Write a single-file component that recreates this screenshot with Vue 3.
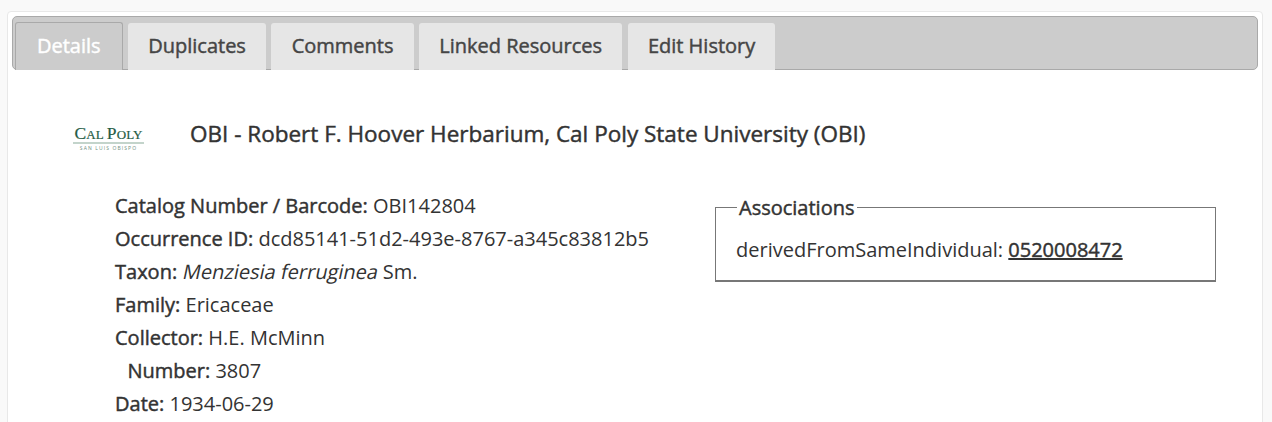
<script setup>
const tabs = ['Details', 'Duplicates', 'Comments', 'Linked Resources', 'Edit History']

const fields = [
  { label: 'Catalog Number / Barcode:', value: 'OBI142804' },
  { label: 'Occurrence ID:', value: 'dcd85141-51d2-493e-8767-a345c83812b5' },
  { label: 'Taxon:', italic: 'Menziesia ferruginea', value: 'Sm.' },
  { label: 'Family:', value: 'Ericaceae' },
  { label: 'Collector:', value: 'H.E. McMinn' },
  { label: 'Number:', value: '3807', indent: true },
  { label: 'Date:', value: '1934-06-29' }
]
</script>

<template>
  <div class="page">
    <div class="card">
      <ul class="tabs">
        <li v-for="(tab, i) in tabs" :key="tab" class="tab" :class="{ active: i === 0 }">{{ tab }}</li>
      </ul>

      <div class="title-row">
        <div class="logo">
          <div class="logo-name"><span class="big">C</span>AL <span class="big">P</span>OLY</div>
          <div class="logo-sub">SAN LUIS OBISPO</div>
        </div>
        <h1 class="title">OBI - Robert F. Hoover Herbarium, Cal Poly State University (OBI)</h1>
      </div>

      <div class="body">
        <div class="fields">
          <div v-for="f in fields" :key="f.label" class="field" :class="{ indent: f.indent }">
            <b>{{ f.label }}</b>
            {{ ' ' }}<i v-if="f.italic">{{ f.italic }}</i><template v-if="f.italic">{{ ' ' }}</template>{{ f.value }}
          </div>
        </div>

        <fieldset class="assoc">
          <legend>Associations</legend>
          derivedFromSameIndividual: <a href="#">0520008472</a>
        </fieldset>
      </div>
    </div>
  </div>
</template>

<style>
html,
body {
  background: #f9f9f9;
}
</style>

<style scoped>
.page {
  height: 422px;
  overflow: hidden;
  padding: 11px 9px 0 7px;
  box-sizing: border-box;
  font-family: "Open Sans", sans-serif;
  font-size: 20px;
  color: #333;
}

.card {
  height: 440px;
  box-sizing: border-box;
  background: #fff;
  border: 1px solid #e8e8e8;
  border-radius: 4px;
  padding: 4px;
}

.tabs {
  display: flex;
  gap: 5.4px;
  height: 54px;
  box-sizing: border-box;
  margin: 0;
  padding: 6px 0 0 2px;
  list-style: none;
  background: #ccc;
  border: 1px solid #a9a9a9;
  border-radius: 5px;
}

.tab {
  height: 47px;
  padding: 0 20.2px;
  line-height: 45px;
  font-size: 20px;
  font-weight: 400;
  -webkit-text-stroke: 0.45px currentColor;
  color: #454545;
  background: #e6e6e6;
  border-radius: 3px 3px 0 0;
}

.tab.active {
  margin-top: -1px;
  height: 48px;
  padding: 0 21px;
  color: #fff;
  background: #ccc;
  border: 1px solid #a9a9a9;
  border-bottom: 0;
  box-sizing: border-box;
}

.title-row {
  display: flex;
  align-items: flex-start;
  height: 30px;
  margin-top: 49px;
  padding-left: 61px;
}

.logo {
  width: 71px;
  margin: 7px 46px 0 0;
  color: #1f5c45;
  text-align: center;
}

.logo-name {
  font-family: "Liberation Serif", serif;
  font-size: 13px;
  line-height: 14px;
  letter-spacing: 0.15px;
  white-space: nowrap;
  -webkit-text-stroke: 0.2px currentColor;
  border-bottom: 2px solid #c3d4cb;
}

.logo-name .big {
  font-size: 17.5px;
}

.logo-sub {
  font-size: 5px;
  line-height: 8px;
  letter-spacing: 1.1px;
  white-space: nowrap;
  color: #6f8f80;
}

.title {
  margin: 0;
  font-size: 22.5px;
  font-weight: 400;
  -webkit-text-stroke: 0.45px currentColor;
  line-height: 30px;
  color: #333;
}

.body {
  display: flex;
  margin-top: 40px;
}

.fields {
  width: 600px;
  padding-left: 103px;
  box-sizing: content-box;
}

.field {
  height: 33px;
  line-height: 33px;
  white-space: nowrap;
}

.field.indent {
  padding-left: 12.5px;
}

.field b {
  font-weight: 400;
  -webkit-text-stroke: 0.45px currentColor;
}

/* the reference slants the upright face, the italic cut is narrower */
.field i {
  display: inline-block;
  font-style: normal;
  transform: skewX(-12deg);
  transform-origin: 50% 70%;
}

.assoc {
  width: 501px;
  height: 75px;
  box-sizing: border-box;
  margin: 18px 0 0 0;
  padding: 28px 20px 0;
  border: 1px solid #777;
  border-bottom-width: 2px;
  line-height: 28px;
}

.assoc legend {
  padding: 0 2px;
  margin-left: 1px;
  font-size: 20px;
  font-weight: 400;
  -webkit-text-stroke: 0.45px currentColor;
  line-height: 0;
}

.assoc a {
  color: #333;
  font-weight: 400;
  -webkit-text-stroke: 0.45px currentColor;
  text-decoration: underline;
}
</style>
